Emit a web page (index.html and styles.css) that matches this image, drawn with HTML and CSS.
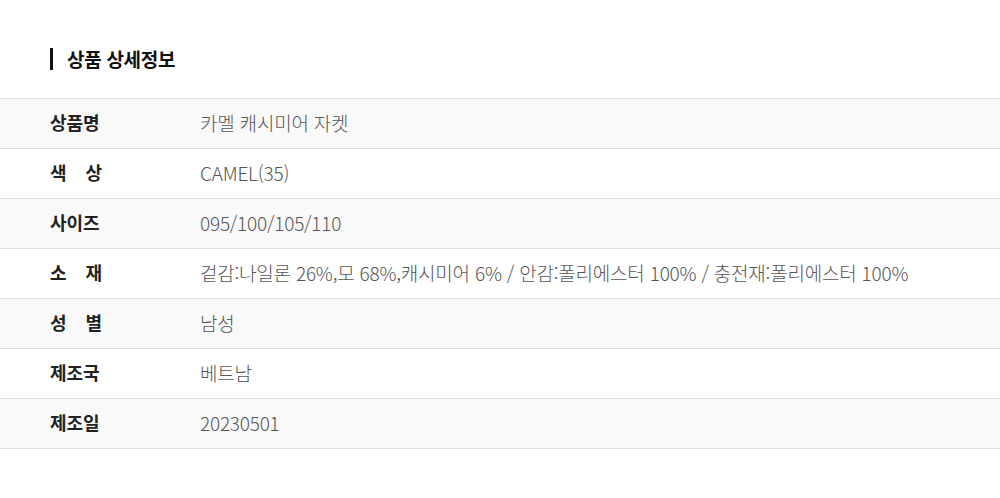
FILE: index.html
```html
<!DOCTYPE html>
<html lang="ko">
<head>
<meta charset="utf-8">
<link rel="stylesheet" href="styles.css">
</head>
<body>
<section class="detail">
  <h2 class="detail-title">상품 상세정보</h2>
  <div class="info">
    <div class="row"><div class="label"><span class="lbl">상품명</span></div><div class="value">카멜 캐시미어 자켓</div></div>
    <div class="row"><div class="label"><span class="lbl just">색 상</span></div><div class="value">CAMEL(35)</div></div>
    <div class="row"><div class="label"><span class="lbl">사이즈</span></div><div class="value">095/100/105/110</div></div>
    <div class="row"><div class="label"><span class="lbl just">소 재</span></div><div class="value">겉감:나일론 26%,모 68%,캐시미어 6% / 안감:폴리에스터 100% / 충전재:폴리에스터 100%</div></div>
    <div class="row"><div class="label"><span class="lbl just">성 별</span></div><div class="value">남성</div></div>
    <div class="row"><div class="label"><span class="lbl">제조국</span></div><div class="value">베트남</div></div>
    <div class="row"><div class="label"><span class="lbl">제조일</span></div><div class="value">20230501</div></div>
  </div>
</section>
</body>
</html>
```

FILE: styles.css
```css
html, body {
  margin: 0;
  padding: 0;
  background: #fff;
}
body {
  font-family: "Noto Sans CJK KR", "Noto Sans", sans-serif;
  color: #222;
}
.detail {
  padding-top: 48px;
}
.detail-title {
  margin: 0 0 28px 50px;
  padding-left: 14px;
  border-left: 3px solid #111;
  font-size: 19px;
  font-weight: 700;
  line-height: 22px;
  height: 22px;
  color: #111;
  letter-spacing: -0.3px;
  display: flex;
  align-items: center;
}
.info {
  border-top: 1px solid #ddd;
}
.row {
  display: flex;
  align-items: center;
  height: 50px;
  box-sizing: border-box;
  padding-bottom: 3px;
  border-bottom: 1px solid #ddd;
}
.row:nth-child(odd) {
  background: #f9f9f9;
}
.label {
  width: 200px;
  padding-left: 50px;
  box-sizing: border-box;
  flex: none;
}
.lbl {
  display: inline-block;
  font-size: 18px;
  font-weight: 700;
  color: #222;
}
.lbl.just {
  width: 52px;
  text-align: justify;
  text-align-last: justify;
}
.value {
  font-size: 19px;
  font-weight: 300;
  color: #555;
  letter-spacing: -0.22px;
}
```
